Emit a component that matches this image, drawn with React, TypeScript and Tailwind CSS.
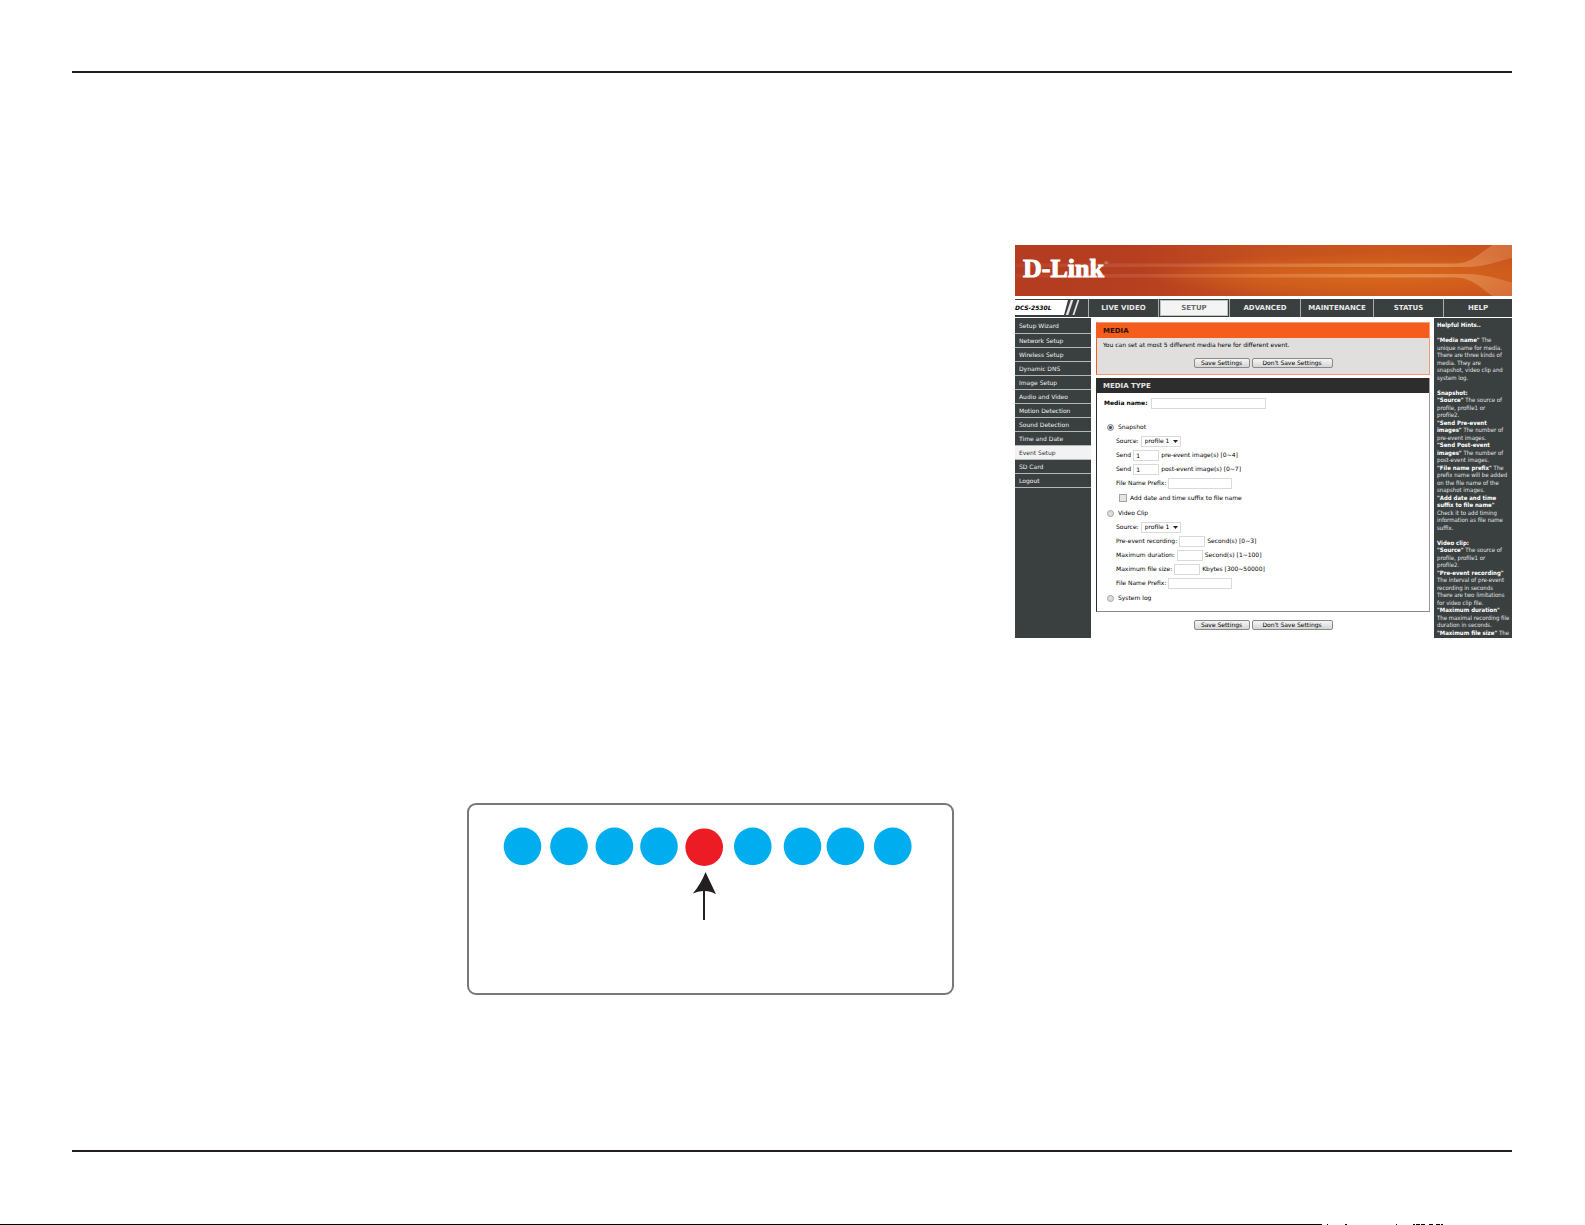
import React, { useId, useState } from 'react';
import clsx from 'clsx';

const navItems = ['LIVE VIDEO', 'SETUP', 'ADVANCED', 'MAINTENANCE', 'STATUS', 'HELP'];

const sideItems = [
  'Setup Wizard',
  'Network Setup',
  'Wireless Setup',
  'Dynamic DNS',
  'Image Setup',
  'Audio and Video',
  'Motion Detection',
  'Sound Detection',
  'Time and Date',
  'Event Setup',
  'SD Card',
  'Logout',
];

// One entry per line: [bold part, regular part]
const hintLines: [string, string][] = [
  ['Helpful Hints..', ''],
  ['', ''],
  ['"Media name"', ' The'],
  ['', 'unique name for media.'],
  ['', 'There are three kinds of'],
  ['', 'media. They are'],
  ['', 'snapshot, video clip and'],
  ['', 'system log.'],
  ['', ''],
  ['Snapshot:', ''],
  ['"Source"', ' The source of'],
  ['', 'profile, profile1 or'],
  ['', 'profile2.'],
  ['"Send Pre-event', ''],
  ['images"', ' The number of'],
  ['', 'pre-event images.'],
  ['"Send Post-event', ''],
  ['images"', ' The number of'],
  ['', 'post-event images.'],
  ['"File name prefix"', ' The'],
  ['', 'prefix name will be added'],
  ['', 'on the file name of the'],
  ['', 'snapshot images.'],
  ['"Add date and time', ''],
  ['suffix to file name"', ''],
  ['', 'Check it to add timing'],
  ['', 'information as file name'],
  ['', 'suffix.'],
  ['', ''],
  ['Video clip:', ''],
  ['"Source"', ' The source of'],
  ['', 'profile, profile1 or'],
  ['', 'profile2.'],
  ['"Pre-event recording"', ''],
  ['', 'The interval of pre-event'],
  ['', 'recording in seconds'],
  ['', 'There are two limitations'],
  ['', 'for video clip file.'],
  ['"Maximum duration"', ''],
  ['', 'The maximal recording file'],
  ['', 'duration in seconds.'],
  ['"Maximum file size"', ' The'],
];

const dots = [
  { cx: 55.5, cy: 43.4 },
  { cx: 102, cy: 43.4 },
  { cx: 147.4, cy: 43.4 },
  { cx: 192, cy: 43.4 },
  { cx: 237.2, cy: 44.2, trigger: true },
  { cx: 285.8, cy: 43.4 },
  { cx: 335.5, cy: 43.4 },
  { cx: 378.4, cy: 43.4 },
  { cx: 425.8, cy: 43.4 },
];

const Banner: React.FC = () => (
  <header className="relative h-[51px] overflow-hidden">
    <svg
      className="absolute inset-0 h-full w-full"
      viewBox="0 0 497 51"
      preserveAspectRatio="none"
      aria-hidden="true"
    >
      <defs>
        <linearGradient id="bannerBase" x1="0" x2="1" y1="0" y2="0">
          <stop offset="0" stopColor="#b33c21" />
          <stop offset="0.25" stopColor="#b63f20" />
          <stop offset="0.5" stopColor="#c4501f" />
          <stop offset="0.75" stopColor="#cb571d" />
          <stop offset="1" stopColor="#c8541d" />
        </linearGradient>
        <radialGradient id="bannerGlow" cx="0.72" cy="0.6" r="0.45">
          <stop offset="0" stopColor="#d8681b" />
          <stop offset="0.5" stopColor="#d5641b" stopOpacity="0.7" />
          <stop offset="1" stopColor="#d5641b" stopOpacity="0" />
        </radialGradient>
        <linearGradient id="bannerStripe" gradientUnits="userSpaceOnUse" x1="0" x2="497" y1="0" y2="0">
          <stop offset="0" stopColor="#fff" stopOpacity="0.04" />
          <stop offset="0.4" stopColor="#ffd9b0" stopOpacity="0.16" />
          <stop offset="0.85" stopColor="#ffd0a0" stopOpacity="0.36" />
          <stop offset="1" stopColor="#ffc090" stopOpacity="0.24" />
        </linearGradient>
      </defs>
      <rect width="497" height="51" fill="url(#bannerBase)" />
      <rect width="497" height="51" fill="url(#bannerGlow)" />
      <path
        d="M0 18.500H440C458 18.500 466 6 478 0H497V13C486 15 472 22 450 22H0Z"
        fill="url(#bannerStripe)"
      />
      <path
        d="M0 29H450C472 29 486 35 497 37.500V51H478C466 44 458 32.500 440 32.500H0Z"
        fill="url(#bannerStripe)"
      />
    </svg>
    <a
      href="#home"
      className="relative ml-[8px] flex items-start pt-[11px] font-['Liberation_Serif',serif] text-[26px] leading-[26px] font-bold text-white [-webkit-text-stroke:1px_white]"
    >
      D-Link
      <sup className="top-[4px] text-[6px] leading-[6px] font-normal opacity-60 [-webkit-text-stroke:0px]">®</sup>
    </a>
  </header>
);

const TopNav: React.FC = () => (
  <nav className="mt-[3px] grid h-[18px] grid-cols-[73px_70fr_71fr_71fr_73fr_70fr_69fr] bg-[#3a3f40]">
    <div className="relative flex items-center">
      <svg className="absolute inset-0 h-full w-full" viewBox="0 0 73 18" aria-hidden="true">
        <path d="M0 1H53L49 16H0Z" fill="#fff" />
        <path d="M55.800 1H58.300L53.300 16H50.800Z" fill="#e6e6e6" />
        <path d="M62.500 1H64.300L59.300 16H57.500Z" fill="#e6e6e6" />
      </svg>
      <span className="relative text-[6px] leading-[8px] font-bold text-black italic">DCS-2530L</span>
    </div>
    {navItems.map((item) => (
      <a
        key={item}
        href={`#${item.toLowerCase().replace(' ', '-')}`}
        className={clsx(
          'flex items-center justify-center border-l border-[#a9acac] text-[7px] leading-[8px] font-bold whitespace-nowrap',
          item === 'SETUP' ? 'p-[1px] text-[#6a6c6d]' : 'text-[#e8e8e8]'
        )}
      >
        {item === 'SETUP' ? (
          <span className="flex h-full w-full items-center justify-center border border-[#bfc1c1] bg-[#f4f4f4]">
            {item}
          </span>
        ) : (
          item
        )}
      </a>
    ))}
  </nav>
);

const SideMenu: React.FC = () => (
  <nav className="w-[76px] shrink-0 bg-[#3a3f40] text-[6px]">
    <ul className="pt-[1px]">
      {sideItems.map((item, i) => (
        <li
          key={item}
          className={clsx(
            'flex items-center border-b border-[#b5b8b8] pl-[4px]',
            i === 0 ? 'h-[15px]' : 'h-[14px]',
            item === 'Event Setup' ? 'bg-[#f2f2f2] text-[#333]' : 'text-[#eef0f0]'
          )}
        >
          <a href={`#${item.toLowerCase().replace(/ /g, '-')}`} className="leading-[8px] whitespace-nowrap">
            {item}
          </a>
        </li>
      ))}
    </ul>
  </nav>
);

const Hints: React.FC = () => (
  <aside className="grid w-[78px] shrink-0 auto-rows-[8px_7px] overflow-hidden bg-[#3a3f40] pt-[3px] pb-[2px] pl-[3px] font-['DejaVu_Sans_Condensed','DejaVu_Sans',sans-serif] text-[6px] leading-[8px] text-[#e3e5e5]">
    {hintLines.map(([term, text], i) => (
      <p key={i} className="whitespace-nowrap">
        {term && <b className="text-white">{term}</b>}
        {text}
      </p>
    ))}
  </aside>
);

const Actions: React.FC = () => (
  <div className="flex justify-center gap-[2px]">
    <button
      type="submit"
      className="h-[10px] w-[56px] rounded-[2px] border border-[#8a8a8a] bg-linear-to-b from-[#f6f6f6] to-[#d4d4d4] text-[6px] leading-[8px] whitespace-nowrap text-black"
    >
      Save Settings
    </button>
    <button
      type="reset"
      className="h-[10px] w-[81px] rounded-[2px] border border-[#8a8a8a] bg-linear-to-b from-[#f6f6f6] to-[#d4d4d4] text-[6px] leading-[8px] whitespace-nowrap text-black"
    >
      Don't Save Settings
    </button>
  </div>
);

interface FieldProps {
  label: string;
  suffix?: string;
  value?: string;
  width: string;
}

const Field: React.FC<FieldProps> = ({ label, suffix, value = '', width }) => {
  const id = useId();
  return (
    <div className="flex h-[14px] items-center gap-[2px] pl-[19px]">
      <label htmlFor={id}>{label}</label>
      <input
        id={id}
        type="text"
        defaultValue={value}
        className={clsx('h-[11px] border border-[#dadada] bg-white px-[2px] text-[6px] leading-[8px]', width)}
      />
      {suffix && <span>{suffix}</span>}
    </div>
  );
};

const SourceSelect: React.FC = () => {
  const id = useId();
  return (
    <div className="flex h-[14px] items-center gap-[2px] pl-[19px]">
      <label htmlFor={id}>Source:</label>
      <div className="relative flex">
        <select
          id={id}
          className="h-[11px] w-[40px] appearance-none border border-[#dadada] bg-white pl-[3px] text-[6px] leading-[8px]"
        >
          <option>profile 1</option>
          <option>profile 2</option>
        </select>
        <svg
          className="pointer-events-none absolute top-[4px] right-[3px] h-[3px] w-[5px]"
          viewBox="0 0 5 3"
          aria-hidden="true"
        >
          <path d="M0 0H5L2.500 3Z" fill="#222" />
        </svg>
      </div>
    </div>
  );
};

interface KindProps {
  name: string;
  current: string;
  onSelect: (name: string) => void;
}

const Kind: React.FC<KindProps> = ({ name, current, onSelect }) => (
  <label className="flex h-[14px] items-center gap-[4px] pl-[10px]">
    <input
      type="radio"
      name="kind"
      checked={current === name}
      onChange={() => onSelect(name)}
      className="size-[7px] appearance-none rounded-full border border-[#a4a4a4] bg-[#dedede] checked:bg-[#34465e] checked:shadow-[inset_0_0_0_1px_#e4e4e4]"
    />
    {name}
  </label>
);

const MediaForm: React.FC = () => {
  const [kind, setKind] = useState('Snapshot');

  return (
    <form className="min-w-0 flex-1 pt-[4px] pr-[4px] pl-[5px]" onSubmit={(e) => e.preventDefault()}>
      <section className="border border-[#f29b78] border-l-[#f45d1b] bg-[#e0dfdd] pb-[6px]">
        <h2 className="h-[15px] bg-[#f45d1b] pt-[1px] pl-[6px] text-[7px] leading-[14px] font-bold text-[#2a1208]">
          MEDIA
        </h2>
        <p className="mb-[6px] h-[14px] pl-[6px] leading-[14px] whitespace-nowrap">
          You can set at most 5 different media here for different event.
        </p>
        <Actions />
      </section>

      <section className="mt-[3px] mb-[8px] border-r border-b border-l border-r-[#999c9c] border-b-[#888b8b] border-l-[#2d2d2d] pb-[5px]">
        <h2 className="h-[15px] bg-[#2d2d2d] pt-[1px] pl-[6px] text-[7px] leading-[14px] font-bold text-[#e4e4e4]">
          MEDIA TYPE
        </h2>
        <div className="mt-[3px] mb-[10px] flex h-[14px] items-center gap-[3px] pl-[7px]">
          <label htmlFor="media-name" className="font-bold">
            Media name:
          </label>
          <input
            id="media-name"
            type="text"
            className="h-[11px] w-[115px] border border-[#dadada] bg-white px-[2px] text-[6px] leading-[8px]"
          />
        </div>

        <Kind name="Snapshot" current={kind} onSelect={setKind} />
        <SourceSelect />
        <Field label="Send" value="1" suffix="pre-event image(s) [0~4]" width="w-[26px]" />
        <Field label="Send" value="1" suffix="post-event image(s) [0~7]" width="w-[26px]" />
        <Field label="File Name Prefix:" width="w-[64px]" />
        <label className="flex h-[16px] items-center gap-[3px] pl-[22px]">
          <input
            type="checkbox"
            className="size-[8px] appearance-none border border-[#a4a4a4] bg-[#e4e4e4] checked:bg-[#34465e]"
          />
          Add date and time suffix to file name
        </label>

        <Kind name="Video Clip" current={kind} onSelect={setKind} />
        <SourceSelect />
        <Field label="Pre-event recording:" suffix="Second(s) [0~3]" width="w-[26px]" />
        <Field label="Maximum duration:" suffix="Second(s) [1~100]" width="w-[26px]" />
        <Field label="Maximum file size:" suffix="Kbytes [300~50000]" width="w-[26px]" />
        <Field label="File Name Prefix:" width="w-[64px]" />
        <div className="pt-[1px] pb-[1px]">
          <Kind name="System log" current={kind} onSelect={setKind} />
        </div>
      </section>
      <Actions />
    </form>
  );
};

const EventDiagram: React.FC = () => (
  <figure className="mt-[165px] ml-[395px] h-[192px] w-[487px] rounded-[9px] border-2 border-[#787878]">
    <svg className="-m-[2px] h-[192px] w-[487px]" viewBox="0 0 487 192" role="img">
      {dots.map((dot) => (
        <circle key={dot.cx} cx={dot.cx} cy={dot.cy} r="18.800" fill={dot.trigger ? '#ed1c24' : '#00aeef'} />
      ))}
      <path d="M238.500 69L249 91.300Q243 88 238 88V117H236V88Q231 88 225.800 90.500Q234 81 238.500 69Z" fill="#231f20" />
    </svg>
  </figure>
);

const App: React.FC = () => (
  <div className="bg-white font-['DejaVu_Sans',sans-serif] text-black">
    <main className="pt-[71px] pr-[73px] pl-[72px]">
      <hr className="border-t-2 border-[#231f20]" />
      <div className="mt-[172px] ml-auto w-[34.5%] min-w-[497px] text-[6px] leading-[8px]">
        <Banner />
        <TopNav />
        <div className="mt-[1px] flex">
          <SideMenu />
          <MediaForm />
          <Hints />
        </div>
      </div>
      <EventDiagram />
      <hr className="mt-[155px] border-t-2 border-[#231f20]" />
    </main>
    <footer className="mt-[72px]">
      <svg className="block h-px w-full" viewBox="0 0 1585 1" preserveAspectRatio="none" aria-hidden="true">
        <path
          d="M0 0H1322V1H0ZM1327 0H1328V1H1327ZM1345 0H1347V1H1345ZM1396 0H1397V1H1396ZM1413 0H1415V1H1413ZM1416 0H1420V1H1416ZM1421 0H1425V1H1421ZM1429 0H1433V1H1429ZM1436 0H1440V1H1436ZM1441 0H1443V1H1441Z"
          fill="#000"
        />
      </svg>
    </footer>
  </div>
);

export default App;
